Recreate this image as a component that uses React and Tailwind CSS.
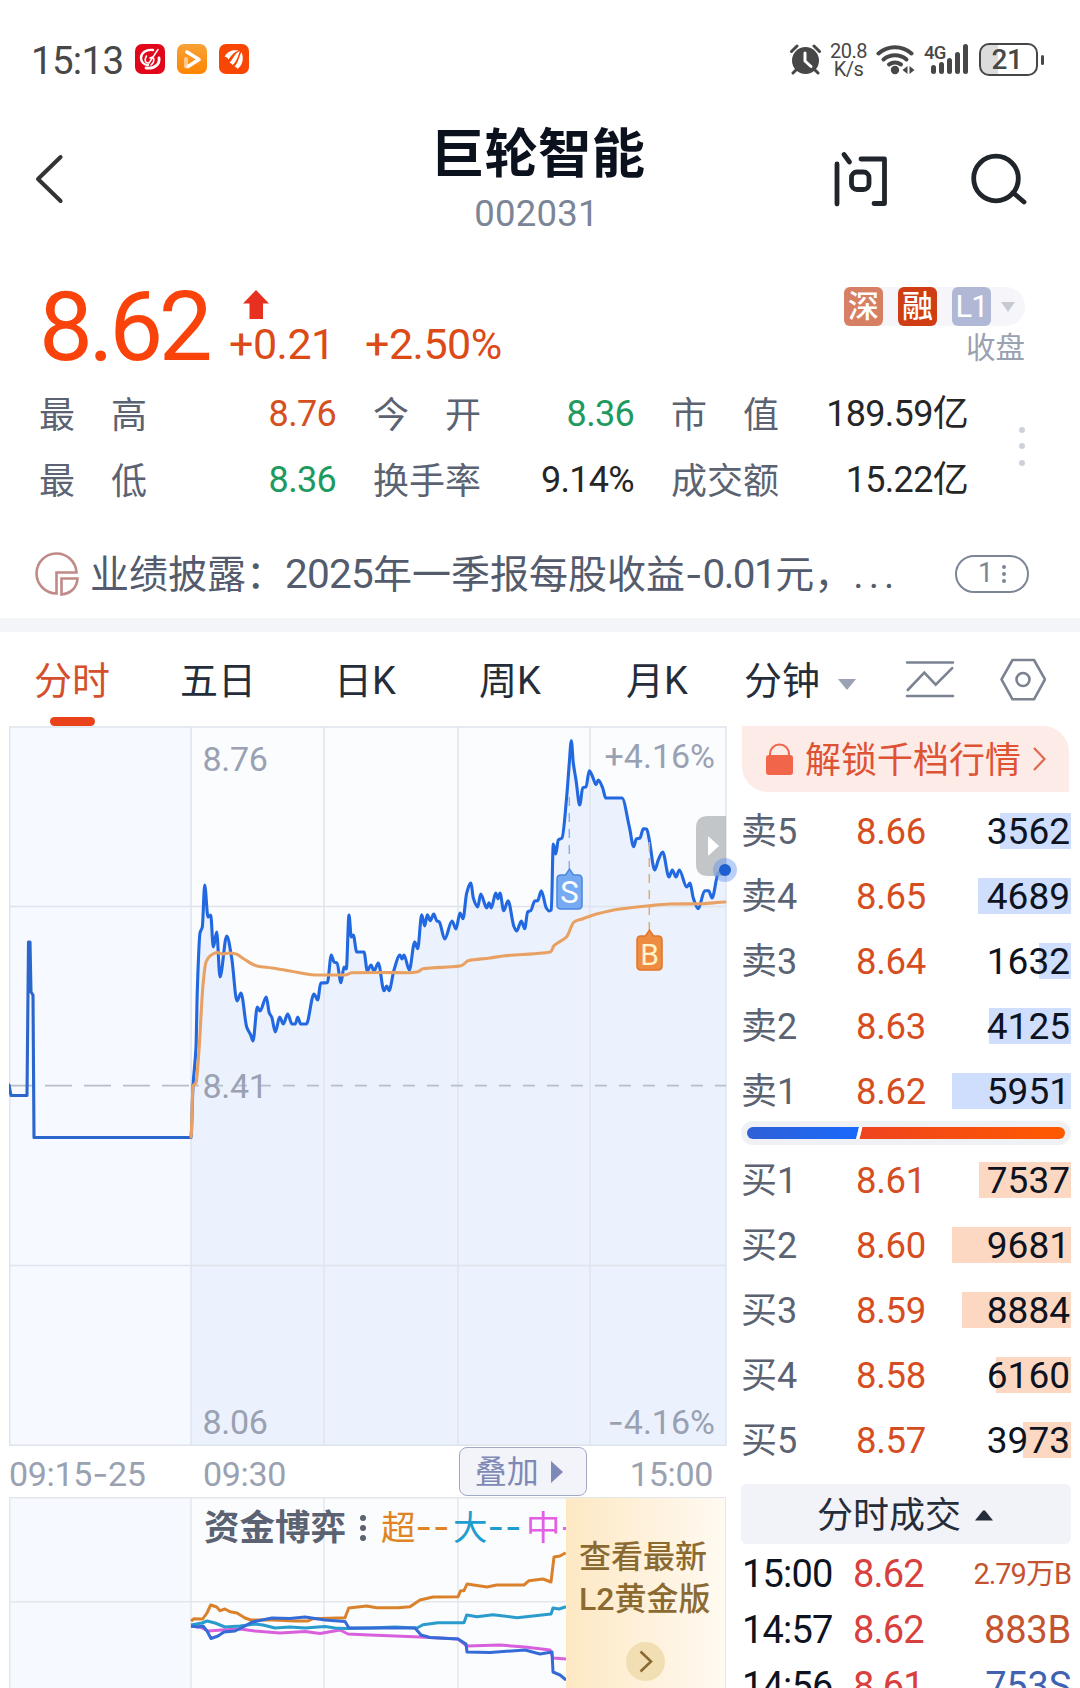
import React from 'react';

const stats = [
    [
        { label: ['最', '高'], value: '8.76', color: 'text-[#d4501f]' },
        { label: ['今', '开'], value: '8.36', color: 'text-[#1f9a5f]' },
        { label: ['市', '值'], value: '189.59亿', color: 'text-[#262626]' },
    ],
    [
        { label: ['最', '低'], value: '8.36', color: 'text-[#1f9a5f]' },
        { label: ['换', '手', '率'], value: '9.14%', color: 'text-[#262626]' },
        { label: ['成', '交', '额'], value: '15.22亿', color: 'text-[#262626]' },
    ],
];

const sells = [
    { name: '卖5', price: '8.66', volume: 3562, bar: 71 },
    { name: '卖4', price: '8.65', volume: 4689, bar: 93 },
    { name: '卖3', price: '8.64', volume: 1632, bar: 32 },
    { name: '卖2', price: '8.63', volume: 4125, bar: 82 },
    { name: '卖1', price: '8.62', volume: 5951, bar: 119 },
];

const buys = [
    { name: '买1', price: '8.61', volume: 7537, bar: 92 },
    { name: '买2', price: '8.60', volume: 9681, bar: 119 },
    { name: '买3', price: '8.59', volume: 8884, bar: 109 },
    { name: '买4', price: '8.58', volume: 6160, bar: 75 },
    { name: '买5', price: '8.57', volume: 3973, bar: 48 },
];

const trades = [
    { time: '15:00', price: '8.62', volume: '2.79万B', style: 'text-[29px] tracking-[-1px] text-[#c4532f]' },
    { time: '14:57', price: '8.62', volume: '883B', style: 'text-[38px] tracking-[-0.2px] text-[#c4532f]' },
    { time: '14:56', price: '8.61', volume: '753S', style: 'text-[38px] tracking-[-0.2px] text-[#3f63b0]' },
];

const preOpenLine = '9,1085 11,1095.5 27,1095.5 28.5,942 30,942 31,992 33,995 34,1137.5 191,1137.5';

const priceLine =
    '191,1137 193,1086 196,1047 197.3,990 200,933 202.3,927 204.7,885 208,917 210.7,915 213.3,947 216.7,932 220,977 226.7,936 231.7,958 237,1001 241,993 246.7,1027 250.7,1035 253,1041 257.3,1007 260,1011 266.3,997 269.3,1013 271.7,1017 275.3,1032 279.7,1017 283.3,1024 287.7,1014 292,1024 295.3,1024 297.7,1017 300.7,1024 306.3,1024 314,994 317.7,1000 320.7,983 327.3,982.7 331.3,955 334,962 337,963 341,982.7 344,967 346.3,969 349,915 351.3,937 353.3,935 356.7,952 364,952 367.3,971 371,965 374,971 378.3,963 384,990.7 386.7,986 389,990.7 394,970 400,955 402,959 404,955 409.3,970 414.7,942 417.7,948.7 421.7,914.7 424.7,926 427.3,914.7 430.3,920.7 433.7,914 436.7,920.7 439.3,922 444.7,939 452,921 456,929 460,913 463,918.7 466.7,893 471,883 473.3,898 477.7,907 480.7,894 486.7,908 489,902.7 491.3,908 495.7,893 498,898.7 500,893 503.7,910.7 508,900.7 514,926.7 516.7,931 521.3,921 524.7,928.7 527.7,911.7 530.7,910.7 534.7,901 537.7,900.7 541.3,890.7 546.3,908 549.3,911 551.3,910 553.3,844 555.7,854 558.3,840 562,838 566.7,796.7 569.3,763 571.3,740.7 573.3,763 576,780 579.7,805 582.7,788 586,786.7 589.3,770.7 592.7,777 596,784.7 598.3,780 602.7,788 605.7,798 622,798 629.3,826.7 633.7,846.7 636.3,839 640,838 643.3,828.7 646.7,829 649.3,840 654.7,870 658.3,860 662.7,852 669,877 672.3,870 676,877 679.3,870 686.7,887 690,883 693.3,898 698.3,908.7 704.7,890.7 708.7,890.7 712,898 718.3,873 725,870';

const averageLine =
    '191,1137 193,1086 196,1083 199,1050 203,985 206,962 210,956 217,952.5 223,954 229,953 236,954 244,959 257,966 272,968 290,971 315,975 345,975 352,972.7 380,972.5 409,972.7 418,971.7 423,968.7 460,966 464,964 468,960.7 490,958 503,956 543,953 550.7,951.7 554,945.7 566.7,936.7 574,922 583,918.7 596.7,914 620,909 646.7,906 670,904 703,903.7 725,902';

const fundLines = [
    {
        color: '#d860dc',
        points: '191,1626 200,1627 208,1631 222,1630 240,1629 255,1631 280,1633 305,1631.5 320,1633.5 340,1630 348,1634 370,1635 395,1636 420,1637 458,1639 467,1646 500,1645 525,1647 550,1650 553,1658 566,1659',
    },
    {
        color: '#2a9bcd',
        points: '191,1625 202,1623 207,1621 215,1623 225,1627 240,1626 255,1624 263,1625 275,1628 290,1627 305,1628 325,1626.5 335,1628 345,1628.5 370,1628 395,1627 417,1628 423,1624.7 438,1622.7 464,1622.7 466.7,1615 477,1616.7 493,1614.7 517,1617.7 533,1616 551,1614 553,1608 559,1609 566,1606.7',
    },
    {
        color: '#d9822b',
        points: '191,1621 194,1618.7 202.7,1619 207,1613 210.7,1605 216.7,1607 220,1610.7 225,1609 230,1611.7 237,1613 245,1618 250.7,1620 273,1620 295,1621 308,1621 313,1618.7 345,1617.7 348.7,1608 366.7,1606 376.7,1607.7 398,1607.7 410,1606.7 420,1600 433,1597 458,1596.7 460.7,1590.7 464,1590.7 467,1584 487,1587 496.7,1585 524,1585 529,1580.7 543,1579 551,1582 554,1557 560,1556 565.7,1552.7',
    },
    {
        color: '#356bd6',
        points: '191,1626 198,1627 203,1626 207,1631 211,1638.5 218,1636 224,1632 235,1631 245,1626 252,1622 262,1620 272,1618 290,1618.5 305,1617 325,1620 345,1621.5 349,1628 380,1628 415,1628 421,1635 430,1637.5 458,1639 466,1644 467,1652 490,1652.5 525,1650 540,1654 552,1652 553,1672 560,1675 566,1680',
    },
];

// Monotone cubic through the points: flat at peaks and troughs, so it never overshoots
const smoothPath = (points) => {
    const pts = points.split(' ').map((p) => p.split(',').map(Number));
    const slope = (i) => (pts[i + 1][1] - pts[i][1]) / (pts[i + 1][0] - pts[i][0]);
    const tangents = pts.map((_, i) => {
        if (i === 0 || i === pts.length - 1) return 0;
        const a = slope(i - 1);
        const b = slope(i);
        return a * b <= 0 ? 0 : (2 * a * b) / (a + b);
    });
    return pts.slice(1).reduce((d, [x, y], i) => {
        const [px, py] = pts[i];
        const h = (x - px) / 3;
        return `${d}C${px + h} ${py + h * tangents[i]} ${x - h} ${y - h * tangents[i + 1]} ${x} ${y}`;
    }, `M${pts[0][0]} ${pts[0][1]}`);
};

const StatusBar = () => (
    <div className="flex h-[118px] items-start pl-[31px] pr-[36px] pt-[42px] text-[#474747]">
        <span className="w-[104px] text-[38.5px] leading-[37px] tracking-[-0.7px]">15:13</span>
        <div className="mt-[2px] flex gap-3">
            <svg className="size-[30px]" viewBox="0 0 30 30">
                <rect width="30" height="30" rx="7" fill="#e2061b" />
                <g fill="none" stroke="#fff" strokeLinecap="round">
                    <path d="M18 6C11 5 6 9 6 14c0 4 3 7 7 7" strokeWidth="2.4" />
                    <path d="M24 14c1 6-4 11-13 10" strokeWidth="2.8" />
                    <path d="M23 5.500 14 19M11.500 12c-3 5-.5 7 2 7M15 14c5-3 5 4 1 7" strokeWidth="1.5" />
                </g>
            </svg>
            <svg className="size-[30px]" viewBox="0 0 30 30">
                <defs>
                    <linearGradient id="playBg" x1="0" y1="0" x2="0" y2="1">
                        <stop offset="0" stopColor="#f7a236" />
                        <stop offset="1" stopColor="#ff8500" />
                    </linearGradient>
                </defs>
                <rect width="30" height="30" rx="7" fill="url(#playBg)" />
                <path d="M9 15v7.500" fill="none" stroke="#ffc98c" strokeWidth="4" strokeLinecap="round" />
                <path d="M10 8l12 7.500-11 7" fill="none" stroke="#fff" strokeWidth="3.6" strokeLinejoin="round" strokeLinecap="round" />
            </svg>
            <svg className="size-[30px]" viewBox="0 0 30 30">
                <rect width="30" height="30" rx="7" fill="#fa4604" />
                <g fill="#fff">
                    <path d="M5.500 12.500C9 7 14 5.500 19.500 6.500 15 8 12.500 11 9.500 15.500 8.500 13.500 7.500 13 5.500 12.500z" />
                    <path d="M10.500 18.500C13.500 16.500 15.500 9 21 7c-2 4-2.500 10-7.500 14-1-1-1.500-2-3-2.500z" />
                    <path d="M15.500 22.500C19.500 19 20 12 22.500 8c2.500 6 1.500 13-4 17-.5-1.500-1.500-2-3-2.500z" />
                </g>
            </svg>
        </div>
        <div className="ml-auto flex items-start">
            <svg className="mr-[9px] mt-[2px] h-[31px] w-[31px]" viewBox="0 0 31 31">
                <circle cx="15.500" cy="16.500" r="13.500" fill="#474747" />
                <path d="M1.500 7.500 7 2M29.500 7.500 24 2M6 26l-3 3M25 26l3 3" stroke="#474747" strokeWidth="3" strokeLinecap="round" />
                <path d="M15 9v8l6 5.500" fill="none" stroke="#fff" strokeWidth="3" strokeLinecap="round" strokeLinejoin="round" />
            </svg>
            <div className="w-[37px] text-center text-[20px] leading-[18px] tracking-[-0.5px]">
                <div>20.8</div>
                <div>K/s</div>
            </div>
            <svg className="ml-[9px] mt-[2px] h-[31px] w-[40px]" viewBox="0 0 40 31">
                <g fill="none" stroke="#474747" strokeWidth="4" strokeLinecap="round">
                    <path d="M2.500 9.500a25 25 0 0 1 33 0" />
                    <path d="M7.500 15.500a18 18 0 0 1 23 0" />
                    <path d="M13 20.500a11 11 0 0 1 12 0" />
                </g>
                <circle cx="19" cy="26" r="4.200" fill="#474747" />
                <path d="M31.500 22v8l-5-4zM33.500 22v8l5-4z" fill="#474747" />
            </svg>
            <div className="relative ml-[8px] h-[34px] w-[46px]">
                <span className="absolute left-0 top-[2px] text-[18.5px] font-medium leading-[18px] tracking-[-0.800px]">4G</span>
                <div className="absolute bottom-[2px] left-[7px] flex items-end gap-[3px]">
                    <div className="h-[9px] w-[5px] rounded-full bg-[#474747]"></div>
                    <div className="h-[12px] w-[5px] rounded-full bg-[#474747]"></div>
                    <div className="h-[16px] w-[5px] rounded-full bg-[#474747]"></div>
                    <div className="h-[22px] w-[5px] rounded-full bg-[#474747]"></div>
                    <div className="h-[30px] w-[5px] rounded-full bg-[#474747]"></div>
                </div>
            </div>
            <div className="ml-[9px] mt-[1px] flex items-center gap-[3px]">
                <div className="flex h-[33px] w-[59px] items-center justify-center rounded-[10px] border-2 border-[#474747] bg-[linear-gradient(90deg,#dcdcdc_31%,#fff_31%)] pr-[3px] text-[28px] font-medium leading-none tracking-[-0.5px]">
                    21
                </div>
                <div className="h-[10px] w-[3px] rounded-full bg-[#474747]"></div>
            </div>
        </div>
    </div>
);

const Header = () => (
    <header className="flex h-[132px] items-start justify-between pl-[34px] pr-[52px]">
        <svg className="mt-[36px] h-[50px] w-[170px]" viewBox="35 154 170 50">
            <path d="M61.600 157 39 179l22.600 22" fill="none" stroke="#333" strokeWidth="4" strokeLinecap="round" strokeLinejoin="round" />
        </svg>
        <div className="ml-[38px] mt-[7px] flex flex-col items-center">
            <h1 className="text-[53.5px] font-bold leading-[60px] text-[#0c121d]">巨轮智能</h1>
            <div className="mr-[3px] mt-[10px] text-[36.5px] leading-[38px] tracking-[0.2px] text-[#7c8596]">002031</div>
        </div>
        <svg className="mt-[32px] h-[58px] w-[194px]" viewBox="835 150 194 58">
            <g fill="none" stroke="#20252b" strokeWidth="4.800" strokeLinecap="round" strokeLinejoin="round">
                <path d="M838 164v40M845 154.500l5.500 7.500M862 159h23.500v44.500H875" />
                <rect x="852.500" y="172" width="17.500" height="17.500" rx="5.500" />
                <circle cx="997" cy="178.500" r="22.300" />
                <path d="M1014 192.500l11 9.500" />
            </g>
        </svg>
    </header>
);

const PriceRow = () => (
    <div className="flex h-[132px] items-start pl-[39px] pr-[55px] pt-[34px]">
        <div className="w-[190px] text-[96px] leading-[87px] tracking-[-4.500px] text-[#fa430a]">8.62</div>
        <div>
            <svg className="ml-[14px] mt-[6px] h-[30px] w-[26px]" viewBox="0 0 26 30">
                <path d="M13 0l13 13.500h-6V29H6.500V13.500H0z" fill="#e83020" />
            </svg>
            <div className="mt-[2px] flex text-[43px] leading-[44px] tracking-[-0.500px] text-[#dc4a18]">
                <span className="w-[136px]">+0.21</span>
                <span>+2.50%</span>
            </div>
        </div>
        <div className="ml-auto mt-[3px] text-right">
            <div className="flex items-center rounded-r-full bg-[#f6f6fa] text-[31px] leading-[39px] text-white">
                <div className="h-[39px] w-[39px] rounded-[6px] bg-[#d67f63] text-center font-medium">深</div>
                <div className="h-[39px] w-[15px]"></div>
                <div className="h-[39px] w-[39px] rounded-[6px] bg-[#ce3d14] text-center font-medium">融</div>
                <div className="h-[39px] w-[15px]"></div>
                <div className="h-[39px] w-[39px] rounded-[6px] bg-[#b1b8d6] text-center tracking-[-1px]">L1</div>
                <svg className="mx-[10px] h-[10px] w-[14px]" viewBox="0 0 14 10">
                    <path d="M0 0h14L7 10z" fill="#c6cad3" />
                </svg>
            </div>
            <div className="mt-[6px] text-[29.5px] leading-[33px] text-[#9aa1b0]">收盘</div>
        </div>
    </div>
);

const StatGrid = () => (
    <div className="flex items-center pl-[39px] pr-[55px]">
        <div className="grid auto-rows-[66px] grid-cols-[297px_261px_297px] items-center gap-x-[37px] text-[36px] leading-[44px]">
            {stats.flat().map((item) => (
                <div key={item.label.join('')} className="flex items-start justify-between">
                    <span className="flex w-[108px] justify-between pt-[2px] text-[#5b6272]">
                        {item.label.map((c) => (
                            <span key={c}>{c}</span>
                        ))}
                    </span>
                    <span className={`tracking-[-0.700px] ${item.color}`}>{item.value}</span>
                </div>
            ))}
        </div>
        <div className="mb-[4px] ml-auto flex flex-col gap-[10.500px]">
            <div className="size-[6px] rounded-full bg-[#cdd2da]"></div>
            <div className="size-[6px] rounded-full bg-[#cdd2da]"></div>
            <div className="size-[6px] rounded-full bg-[#cdd2da]"></div>
        </div>
    </div>
);

const NewsRow = () => (
    <div className="flex h-[104px] items-center pl-[35px] pr-[51px] pt-[15px]">
        <svg className="h-[44px] w-[44px]" viewBox="0 0 44 44">
            <g fill="none" stroke="#bf8a88" strokeWidth="2.600">
                <path d="M41.500 20.500A20 20 0 1 0 21.500 41.500V20.500z" />
                <path d="M26.500 26.500H42.500C42 35.500 36 41.500 26.500 42.500z" />
            </g>
        </svg>
        <div className="ml-[11px] mt-[2px] flex w-[815px] items-baseline whitespace-nowrap text-[39px] leading-[48px] text-[#545b6c]">
            <span>业绩披露：</span>
            <span className="text-[40.500px] tracking-[-0.800px]">2025</span>
            <span>年一季报每股收益</span>
            <span className="font-[Inter] text-[38px]">-</span>
            <span className="text-[40.500px] tracking-[-1.500px]">0.01</span>
            <span>元，</span>
            <span className="tracking-[5px]">...</span>
        </div>
        <div className="ml-auto flex h-[38px] w-[74px] items-center justify-center gap-[9px] rounded-full border-[2.500px] border-[#7c8596] text-[27px] leading-none text-[#7c8596]">
            1
            <div className="flex flex-col gap-[3px]">
                <div className="size-[4px] rounded-full bg-[#7c8596]"></div>
                <div className="size-[4px] rounded-full bg-[#7c8596]"></div>
                <div className="size-[4px] rounded-full bg-[#7c8596]"></div>
            </div>
        </div>
    </div>
);

const Tabs = () => (
    <nav className="flex h-[94px] items-start pl-[34px] pr-[34px] pt-[25px] text-[38px] leading-[48px] text-[#262d3a]">
        <div className="flex w-[146px] flex-col items-start text-[#d4502c]">
            分时
            <div className="ml-[16px] mt-[12px] h-[9px] w-[45px] rounded-full bg-[#ea431c]"></div>
        </div>
        <span className="w-[154px]">五日</span>
        <span className="w-[145px]">日K</span>
        <span className="w-[147px]">周K</span>
        <span className="w-[118px]">月K</span>
        <span>分钟</span>
        <svg className="ml-[18px] mt-[22px] h-[11px] w-[18px]" viewBox="0 0 18 11">
            <path d="M0 0h18L9.500 10.500h-1z" fill="#9aa2b4" />
        </svg>
        <svg className="ml-auto mt-[1px] h-[44px] w-[142px]" viewBox="905 658 142 44">
            <g fill="none" stroke="#7b8291" strokeWidth="2.600" strokeLinecap="round">
                <path d="M908 662.500h46M908 696h46M908.800 690l16.500-17.300 11.400 12 16.500-16.500" />
                <path d="M1013.500 660H1035l11 19.300-11 20H1013.500l-11-20z" strokeLinejoin="round" />
                <circle cx="1024" cy="679.500" r="6.500" />
            </g>
        </svg>
    </nav>
);

// viewBox keeps the page offset so the series share one coordinate space
const PriceChart = () => (
    <svg className="block h-[720px] w-[732px]" viewBox="9 726 732 720">
        <rect x="9" y="727" width="182" height="718" fill="#f6f9ff" />
        <rect x="191" y="727" width="535" height="718" fill="#fbfcfe" />
        <path d={`${smoothPath(priceLine)}V1445H191z`} fill="#ebf2fd" />
        <g stroke="#dfe3eb" strokeWidth="1.500" fill="none">
            <path d="M9.700 727H726V1445.300H9.700zM191 727v718M324 727v718M458 727v718M590 727v718M9 906.500h717M9 1265.500h717" />
        </g>
        <path d="M9 1085.700h182" stroke="#b9bdc6" strokeWidth="1.800" strokeDasharray="27 12" strokeDashoffset="3" />
        <path d="M191 1085.700h535" stroke="#b9c0cd" strokeWidth="1.800" strokeDasharray="12 12" strokeDashoffset="4" />
        <g fill="none" strokeLinejoin="round" strokeLinecap="round" strokeWidth="3.100">
            <polyline points={preOpenLine} stroke="#2a66cc" />
            <path d={smoothPath(priceLine)} stroke="#2268e0" />
            <path d={smoothPath(averageLine)} stroke="#e8a163" />
        </g>
        <g fill="#99a1b2" fontSize="34" letterSpacing="-0.300">
            <text x="202.500" y="771">8.76</text>
            <text x="202.500" y="1098">8.41</text>
            <text x="202.500" y="1434">8.06</text>
            <text x="715" y="768" textAnchor="end" letterSpacing="0">+4.16%</text>
            <text x="715" y="1434" textAnchor="end" letterSpacing="0"><tspan className="font-[Inter]" fontSize="35">-</tspan>4.16%</text>
        </g>
        <path d="M569.300 797v72" stroke="#8ab0ec" strokeWidth="1.500" strokeDasharray="9 7" />
        <path d="M649.300 842v88" stroke="#e5a878" strokeWidth="1.500" strokeDasharray="9 7" />
        <path d="M561 875h4.500l4-6 4 6h4.500q4 0 4 4v26q0 4-4 4h-17q-4 0-4-4v-26q0-4 4-4z" fill="#76abf3" stroke="#4b86df" strokeWidth="1.500" />
        <text x="569.500" y="902.500" textAnchor="middle" fontSize="31" fill="#fff">S</text>
        <path d="M641 936h4.500l4-6 4 6h4.500q4 0 4 4v26q0 4-4 4h-17q-4 0-4-4v-26q0-4 4-4z" fill="#ee8c42" stroke="#e37424" strokeWidth="1.500" />
        <text x="649.500" y="964.500" textAnchor="middle" fontSize="30" fill="#fff3c8">B</text>
        <path d="M726 816v60h-18q-12 0-12-12v-36q0-12 12-12z" fill="#b4b6b9" fillOpacity="0.780" />
        <path d="M708.500 837l10 9-10 9z" fill="#fff" stroke="#fff" strokeLinejoin="round" />
        <circle cx="725" cy="870" r="12" fill="#4f8df0" fillOpacity="0.400" />
        <circle cx="725" cy="870" r="6" fill="#1e5fd2" />
    </svg>
);

const TimeAxis = () => (
    <div className="flex h-[51px] w-[717px] items-center pr-[13px] text-[34px] leading-[40px] tracking-[-0.300px] text-[#9aa1b0]">
        <span className="w-[194px] pt-[4px]">09:15<span className="font-[Inter] text-[35px]">-</span>25</span>
        <span className="pt-[4px]">09:30</span>
        <div className="ml-auto mr-[43px] flex h-[49px] w-[128px] items-center rounded-[8px] border-[1.500px] border-[#a0a9c6] bg-[#f3f4f9] pl-[15px] text-[32px] tracking-normal text-[#7f89b5]">
            叠加
            <svg className="ml-[12px] h-[22px] w-[12px]" viewBox="0 0 12 22">
                <path d="M0 0l12 11L0 22z" fill="#7f89b8" />
            </svg>
        </div>
        <span className="pt-[4px]">15:00</span>
    </div>
);

const FundPanel = () => (
    <div className="relative h-[191px] w-[717px] overflow-hidden">
        <svg className="block h-[191px] w-[717px]" viewBox="9 1497 717 191">
            <rect x="9" y="1497" width="182" height="191" fill="#f6f9ff" />
            <rect x="191" y="1497" width="535" height="191" fill="#fbfcfe" />
            <path d="M9.700 1690V1497.700H725.500V1690M191 1497v191M324 1497v191M458 1497v191M9 1601.700h717" stroke="#e3e6ec" strokeWidth="1.500" fill="none" />
            {fundLines.map((line) => (
                <polyline key={line.color} points={line.points} fill="none" stroke={line.color} strokeWidth="3" strokeLinejoin="round" />
            ))}
        </svg>
        <div className="absolute left-[195px] top-[8px] flex w-[362px] items-center overflow-hidden whitespace-nowrap text-[35.500px] leading-[44px]">
            <span className="font-bold text-[#5b6272]">资金博弈</span>
            <div className="ml-[14px] mr-[15px] flex flex-col gap-[4px]">
                <div className="size-[6px] rounded-full bg-[#5b6272]"></div>
                <div className="size-[6px] rounded-full bg-[#5b6272]"></div>
                <div className="size-[6px] rounded-full bg-[#5b6272]"></div>
            </div>
            <span className="w-[72px] shrink-0 text-[34.5px] text-[#e08423]">超<span className="font-[Inter] text-[36px] tracking-[1px]">--</span></span>
            <span className="w-[73px] shrink-0 text-[34.5px] text-[#1f9cd0]">大<span className="font-[Inter] text-[36px] tracking-[1px]">--</span></span>
            <span className="text-[34.5px] text-[#e35fe3]">中<span className="font-[Inter] text-[36px] tracking-[1px]">-</span></span>
        </div>
        <div className="absolute right-[1px] top-[1px] flex h-[190px] w-[159px] flex-col items-start bg-linear-to-r from-[#fee8c4] to-[#fffaf1] pl-[13px] pt-[38px] text-[32px] font-medium leading-[42px] text-[#8b6a32]">
            <span>查看最新</span>
            <span>L2黄金版</span>
            <svg className="ml-[47px] mt-[22px] size-[39px] shrink-0" viewBox="0 0 39 39">
                <circle cx="19.500" cy="19.500" r="19.500" fill="#f2deb3" />
                <path d="M14.500 9.500l10.500 10-10.500 10" fill="none" stroke="#8b6a32" strokeWidth="2.600" />
            </svg>
        </div>
    </div>
);

const OrderRow = ({ name, price, volume, bar, side }) => (
    <div className="flex h-[65px] items-start">
        <div className="flex h-[36px] w-full items-center text-[36px] leading-[39px]">
            <span className="w-[115px] pt-[2px] text-[#5b6272]">{name}</span>
            <span className="text-[36.500px] tracking-[-0.300px] text-[#d64d22]">{price}</span>
            <div className="relative ml-auto flex h-[36px] w-[119px] justify-end">
                <div className={`h-full ${side === 'sell' ? 'bg-[#cfdefc]' : 'bg-[#fcd8c3]'}`} style={{ width: bar }}></div>
                <span className="absolute right-[1px] top-[-1px] text-[37px] text-[#0d131f]">{volume}</span>
            </div>
        </div>
    </div>
);

const OrderBook = () => (
    <div className="w-[330px]">
        <div className="ml-[1px] flex h-[66px] w-[327px] items-center rounded-bl-[26px] rounded-tr-[26px] bg-[#fdebe7] pl-[24px] text-[36px] leading-[44px] text-[#dd5334]">
            <svg className="mr-[12px] h-[32px] w-[27px]" viewBox="0 0 27 32">
                <rect y="12" width="27" height="20" rx="3" fill="#f1654a" />
                <path d="M4 13v-2a9.500 9.500 0 0 1 19 0v2" fill="none" stroke="#f1654a" strokeWidth="2" />
            </svg>
            <span className="pt-[3px]">解锁千档行情</span>
            <svg className="ml-[12px] h-[24px] w-[13px]" viewBox="0 0 13 24">
                <path d="M1 1l10.500 11L1 23" fill="none" stroke="#e2674c" strokeWidth="2.200" />
            </svg>
        </div>
        <div className="mt-[21px]">
            {sells.map((row) => (
                <OrderRow key={row.name} side="sell" {...row} />
            ))}
        </div>
        <div className="mt-[-17px] flex h-[24px] items-center rounded-full bg-[#f0f1f5] px-[6px]">
            <svg className="h-[12px] w-[318px]" viewBox="0 0 318 12">
                <defs>
                    <linearGradient id="sellBar">
                        <stop offset="0" stopColor="#2f60d6" />
                        <stop offset="1" stopColor="#1a69fb" />
                    </linearGradient>
                    <linearGradient id="buyBar">
                        <stop offset="0" stopColor="#ee431f" />
                        <stop offset="1" stopColor="#ff5a00" />
                    </linearGradient>
                </defs>
                <path d="M6 0h106l-3 12H6A6 6 0 0 1 6 0z" fill="url(#sellBar)" />
                <path d="M115.500 0H312a6 6 0 0 1 0 12H112.500z" fill="url(#buyBar)" />
                <path d="M113.700 0l-3 12" stroke="#fff" strokeWidth="3" />
            </svg>
        </div>
        <div className="mt-[17px]">
            {buys.map((row) => (
                <OrderRow key={row.name} side="buy" {...row} />
            ))}
        </div>
        <div className="mt-[-3px] flex h-[60px] items-center rounded-[6px] bg-[#f2f3f8] pl-[76px] text-[36px] leading-[44px] text-[#262d3a]">
            <span className="pt-[3px]">分时成交</span>
            <svg className="ml-[14px] mt-[3px] h-[11px] w-[18px]" viewBox="0 0 18 11">
                <path d="M0 10.500L8 .5h2l8 10z" fill="#262d3a" />
            </svg>
        </div>
        {trades.map((t) => (
            <div key={t.time} className="flex h-[56px] items-center pt-[3px] text-[38px] leading-[44px] tracking-[-0.800px]">
                <span className="w-[112px] pl-px text-[#0d131f]">{t.time}</span>
                <span className="text-[#d8403d]">{t.price}</span>
                <span className={`ml-auto ${t.style}`}>{t.volume}</span>
            </div>
        ))}
    </div>
);

const App = () => (
    <div className="h-[1688px] w-[1080px] overflow-hidden bg-white font-[Roboto,'Noto_Sans_CJK_SC',sans-serif]">
        <StatusBar />
        <Header />
        <PriceRow />
        <StatGrid />
        <NewsRow />
        <div className="h-[14px] bg-[#f4f5f9]"></div>
        <Tabs />
        <main className="flex pl-[9px]">
            <div className="w-[732px]">
                <PriceChart />
                <TimeAxis />
                <FundPanel />
            </div>
            <OrderBook />
        </main>
    </div>
);

export default App;
